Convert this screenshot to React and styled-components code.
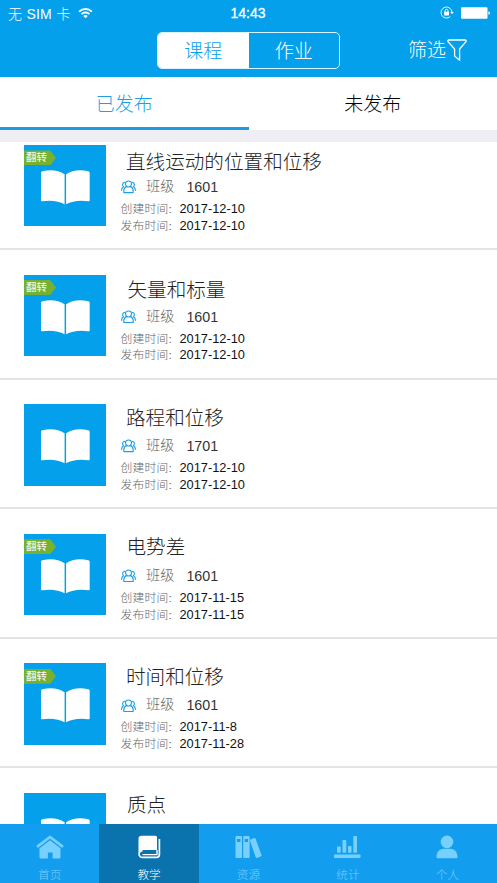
import React from 'react'
import styled, { createGlobalStyle } from 'styled-components'

const courses = [
    { title: '直线运动的位置和位移', group: '1601', created: '2017-12-10', published: '2017-12-10', flipped: true, indent: 5.5, drop: 15.5 },
    { title: '矢量和标量', group: '1601', created: '2017-12-10', published: '2017-12-10', flipped: true, indent: 7, drop: 14 },
    { title: '路程和位移', group: '1701', created: '2017-12-10', published: '2017-12-10', flipped: false, indent: 5.5, drop: 12.8 },
    { title: '电势差', group: '1601', created: '2017-11-15', published: '2017-11-15', flipped: true, indent: 6, drop: 12 },
    { title: '时间和位移', group: '1601', created: '2017-11-8', published: '2017-11-28', flipped: true, indent: 5.5, drop: 12.5 },
    { title: '质点', flipped: false, indent: 6.5, drop: 11 },
]

function WifiIcon() {
    return (
        <svg width="15" height="12" viewBox="0 0 16 12" fill="none" stroke="#fff" strokeWidth="1.9">
            <path d="M1.2 4.5a9.7 9.7 0 0 1 13.6 0" />
            <path d="M3.7 7.2a6.2 6.2 0 0 1 8.6 0" />
            <path d="M8 11.6 5.6 9.2a3.5 3.5 0 0 1 4.8 0z" fill="#fff" stroke="none" />
        </svg>
    )
}

function LockIcon() {
    return (
        <svg width="14" height="13" viewBox="0 0 14 13" fill="none" stroke="#fff" strokeWidth="0.9">
            <path d="M10.2 10.6A5.5 5.5 0 1 1 12 6.5" />
            <path d="M10.3 6.1h3.4L12 8.2z" fill="#fff" stroke="none" />
            <rect x="4.1" y="5.7" width="4.9" height="3.8" rx="0.4" fill="#fff" stroke="none" />
            <path d="M5.1 6V4.7a1.45 1.45 0 0 1 2.9 0V6" />
        </svg>
    )
}

function BatteryIcon() {
    return (
        <svg width="30" height="12" viewBox="0 0 30 12" fill="#fff">
            <rect x="0" y="0.3" width="26.5" height="11.4" rx="1" />
            <path d="M27.4 4.2c2 .3 2 3.3 0 3.6z" />
        </svg>
    )
}

function FunnelIcon() {
    return (
        <svg width="20" height="23" viewBox="0 0 20 23" fill="none" stroke="#fff" strokeWidth="1.3" strokeLinejoin="round">
            <path d="M2 1h16c1.2 0 1.5 1.1.8 1.9L12.6 10v11.2L7.6 17v-7L1.2 2.9C.5 2.1.8 1 2 1z" />
        </svg>
    )
}

function BookIcon() {
    return (
        <svg width="49" height="35" viewBox="0 0 49 35" fill="#fff">
            <path d="M1.4 1.2C9-.6 17.5-.2 23.6 4.3V34.3C18 31 9.5 29.8 1.3 31.3Q0 31.5 0 30.3V2.8Q0 1.500 1.4 1.2z" />
            <path d="M47.3 1.2C39.700-.6 31.200-.2 25.1 4.3V34.3C30.700 31 39.200 29.8 47.4 31.3Q48.7 31.5 48.7 30.3V2.8Q48.7 1.500 47.3 1.2z" />
        </svg>
    )
}

function GroupIcon() {
    return (
        <svg width="15" height="13.5" viewBox="0 0 16 14" fill="none" stroke="#1c9fe8" strokeWidth="1.2" strokeLinecap="round" strokeLinejoin="round">
            <path d="M6.200 6.600C5.300 5.900 4.800 4.900 4.800 3.900 4.800 2 6.200.8 8 .8s3.200 1.200 3.200 3.100c0 1-.5 2-1.400 2.700 1.900.8 3.200 2.400 3.200 4.600v2H3v-2c0-2.200 1.300-3.800 3.200-4.600z" />
            <path d="M6.200 6.700q1.800 1.200 3.600 0" />
            <path d="M3.800 2.300c-1.400.2-2.100 1.100-2.100 2.400 0 1 .4 1.700 1 2.200C1.300 7.600.6 8.800.6 10.800" />
            <path d="M12.200 2.300c1.400.2 2.100 1.100 2.100 2.400 0 1-.4 1.700-1 2.200 1.400.7 2.100 1.900 2.100 3.900" />
        </svg>
    )
}

function HomeIcon() {
    return (
        <svg width="28" height="24" viewBox="0 0 28 24">
            <path d="M2 11.2 14 2l12 9.2" fill="none" stroke="currentColor" strokeWidth="2.8" strokeLinecap="round" strokeLinejoin="round" />
            <path d="M3.500 13.300 14 5.300l10.500 8v9q0 1.200-1.200 1.200H16.600v-6h-4.700v6H4.700q-1.200 0-1.200-1.200z" fill="currentColor" />
        </svg>
    )
}

function TeachIcon() {
    return (
        <svg width="23" height="24" viewBox="0 0 23 24" fill="none" stroke="#fff">
            <path d="M3.500.8H17.500q1.500 0 1.500 1.500V15H4.500C2.500 15 .5 17 .5 19V3.800q0-3 3-3z" fill="#fff" stroke="none" />
            <path d="M4.500 15.600a3.300 3.300 0 0 0 0 6.800H18.500q2.900 0 2.900-2.800V4" strokeWidth="1.7" />
            <path d="M19 15v4.600H4.500" strokeWidth="1.4" />
        </svg>
    )
}

function ShelfIcon() {
    return (
        <svg width="27" height="24" viewBox="0 0 27 24" fill="currentColor" fillRule="evenodd">
            <path d="M1.500 1H6q1 0 1 1v20q0 1-1 1H1.500q-1 0-1-1V2q0-1 1-1zM2 4v3h3.400V4z" />
            <path d="M9.200 1h4.400q1 0 1 1v20q0 1-1 1H9.200q-1 0-1-1V2q0-1 1-1zM9.700 4v3h3.400V4z" />
            <path d="m15.600 4.500 3.500-1.500q1-.4 1.400.5l6 16.500q.3 1-.6 1.400L22 22.900q-.9.300-1.300-.6L15 5.700q-.3-.9.600-1.200z" />
        </svg>
    )
}

function StatsIcon() {
    return (
        <svg width="27" height="24" viewBox="0 0 27 24" fill="currentColor">
            <rect x="3" y="11.5" width="3.7" height="6.3" rx=".7" />
            <rect x="8.5" y="5" width="3.8" height="12.8" rx=".7" />
            <rect x="14" y="11" width="3.5" height="6.8" rx=".7" />
            <rect x="19.3" y="1" width="3.7" height="16.8" rx=".7" />
            <rect x="0" y="19.6" width="26.5" height="3.4" rx=".7" />
        </svg>
    )
}

function PersonIcon() {
    return (
        <svg width="22" height="24" viewBox="0 0 22 24" fill="currentColor">
            <circle cx="11" cy="6.9" r="6.3" />
            <path d="M.5 22.200C.5 16.500 4 13.700 7.500 13.700h7c3.500 0 7 2.800 7 8.500q0 1-1 1h-19q-1 0-1-1z" />
        </svg>
    )
}

function CourseRow({ course }) {
    return (
        <Row>
            <Thumb>
                {course.flipped && <Tag>翻转</Tag>}
                <BookIcon />
            </Thumb>
            <Details>
                <Title $indent={course.indent} $drop={course.drop}>{course.title}</Title>
                {course.group && (
                    <Group>
                        <GroupIcon />
                        <span>班级</span>
                        <strong>{course.group}</strong>
                    </Group>
                )}
                {course.created && <DateLine><span>创建时间:</span>{course.created}</DateLine>}
                {course.published && <DateLine><span>发布时间:</span>{course.published}</DateLine>}
            </Details>
        </Row>
    )
}

function App() {
    return (
        <Screen>
            <GlobalStyle />
            <Header>
                <StatusBar>
                    <Carrier>无 SIM 卡<WifiIcon /></Carrier>
                    <Clock>14:43</Clock>
                    <StatusIcons><LockIcon /><BatteryIcon /></StatusIcons>
                </StatusBar>
                <NavBar>
                    <Segmented>
                        <Segment $active>课程</Segment>
                        <Segment>作业</Segment>
                    </Segmented>
                    <Filter>筛选<FunnelIcon /></Filter>
                </NavBar>
            </Header>
            <Tabs>
                <Tab $active>已发布</Tab>
                <Tab>未发布</Tab>
            </Tabs>
            <List>
                {courses.map(course => <CourseRow key={course.title} course={course} />)}
            </List>
            <TabBar>
                <TabItem><HomeIcon /><span>首页</span></TabItem>
                <TabItem $active><TeachIcon /><span>教学</span></TabItem>
                <TabItem><ShelfIcon /><span>资源</span></TabItem>
                <TabItem><StatsIcon /><span>统计</span></TabItem>
                <TabItem><PersonIcon /><span>个人</span></TabItem>
            </TabBar>
        </Screen>
    )
}

const GlobalStyle = createGlobalStyle`
    *{
        box-sizing: border-box;
    }
    body{
        margin: 0;
        background: #fff;
        font-family: "Liberation Sans", "Noto Sans CJK SC", sans-serif;
    }
    svg{
        display: block;
        flex-shrink: 0;
    }
`;

const Screen = styled.div`
    display: flex;
    flex-direction: column;
    width: 497px;
    height: 883px;
    overflow: hidden;
`;

const Header = styled.header`
    height: 77px;
    flex-shrink: 0;
    background: #04a0eb;
    color: #fff;
`;

const StatusBar = styled.div`
    display: grid;
    grid-template-columns: 1fr auto 1fr;
    align-items: center;
    height: 25px;
    padding: 0 6px 0 8px;
    font-size: 14px;
`;

const Carrier = styled.div`
    display: flex;
    align-items: center;
    gap: 8px;
    font-weight: 300;
    letter-spacing: 0.25px;
    white-space: pre;
`;

const Clock = styled.div`
    font-size: 14px;
    margin-right: 3px;
    -webkit-text-stroke: 0.3px #fff;
`;

const StatusIcons = styled.div`
    display: flex;
    justify-content: flex-end;
    align-items: center;
    gap: 7px;
`;

const NavBar = styled.div`
    display: grid;
    grid-template-columns: 1fr 183px 1fr;
    align-items: center;
    height: 51px;
`;

const Segmented = styled.div`
    display: flex;
    grid-column: 2;
    height: 37px;
    border: 1.3px solid #d9f3ff;
    border-radius: 5px;
    overflow: hidden;
`;

const Segment = styled.div`
    display: flex;
    flex: 1;
    align-items: center;
    justify-content: center;
    padding-bottom: 2px;
    font-size: 19px;
    font-weight: 300;
    background: ${props => props.$active ? '#fff' : 'transparent'};
    color: ${props => props.$active ? '#04a0eb' : '#fff'};
`;

const Filter = styled.div`
    display: flex;
    align-items: center;
    gap: 1px;
    padding-left: 68px;
    font-size: 19px;
    font-weight: 300;
    line-height: 24px;
    white-space: nowrap;
`;

const Tabs = styled.div`
    display: flex;
    flex-shrink: 0;
    height: 53px;
`;

const Tab = styled.div`
    display: flex;
    flex: 1;
    align-items: center;
    justify-content: center;
    font-size: 19px;
    font-weight: 300;
    color: ${props => props.$active ? '#1c9fe3' : '#000'};
    border-bottom: 3px solid ${props => props.$active ? '#1c9bde' : '#fff'};
`;

const List = styled.main`
    display: flex;
    flex-direction: column;
    height: 694px;
    flex-shrink: 0;
    overflow: hidden;
    border-top: 12px solid #efeef4;

    /* the list is resting slightly scrolled */
    & > :first-child{
        margin-top: -21.6px;
    }
`;

const Row = styled.article`
    display: flex;
    flex-shrink: 0;
    height: 129.6px;
    padding: 24.5px 0 0 24px;
    border-bottom: 2px solid #e4e4e6;
`;

const Thumb = styled.div`
    position: relative;
    width: 82px;
    height: 81.5px;
    padding: 25px 0 0 17px;
    background: #04a0eb;
`;

const Tag = styled.div`
    position: absolute;
    top: 5.5px;
    left: 0;
    width: 32px;
    height: 15px;
    padding-left: 2px;
    background: #76b230;
    clip-path: polygon(0 0, 82% 0, 100% 50%, 82% 100%, 0 100%);
    color: #fff;
    font-size: 10.5px;
    line-height: 15px;
`;

const Details = styled.div`
    padding-left: 14.5px;
`;

const Title = styled.h2`
    height: 32px;
    margin: 0;
    padding-left: ${props => props.$indent}px;
    font-family: "Noto Sans CJK SC", sans-serif;
    font-size: 19.6px;
    font-weight: 300;
    line-height: ${props => props.$drop * 2}px;
    color: #222;
    white-space: nowrap;
`;

const Group = styled.div`
    display: flex;
    align-items: center;
    height: 20px;
    margin-bottom: 4.2px;
    font-size: 14.3px;
    line-height: 16px;
    span{
        margin: -2px 0 0 10.5px;
        font-size: 14.2px;
        font-weight: 300;
        color: #666;
    }
    strong{
        margin-left: 12px;
        font-weight: 400;
        color: #333;
    }
`;

const DateLine = styled.div`
    display: flex;
    height: 16.8px;
    font-size: 12.8px;
    line-height: 16.8px;
    color: #111;
    span{
        width: 59px;
        font-size: 11.8px;
        font-weight: 300;
        color: #666;
        letter-spacing: 0.2px;
    }
`;

const TabBar = styled.nav`
    display: flex;
    flex: 1;
    background: #129dee;
`;

const TabItem = styled.div`
    display: flex;
    flex: 1;
    flex-direction: column;
    align-items: center;
    padding-top: 11px;
    color: ${props => props.$active ? '#fff' : '#78d0ff'};
    background: ${props => props.$active ? '#0a72ad' : 'transparent'};
    span{
        margin-top: 7px;
        font-size: 11.7px;
        font-weight: 300;
        line-height: 17px;
    }
`;

export default App
